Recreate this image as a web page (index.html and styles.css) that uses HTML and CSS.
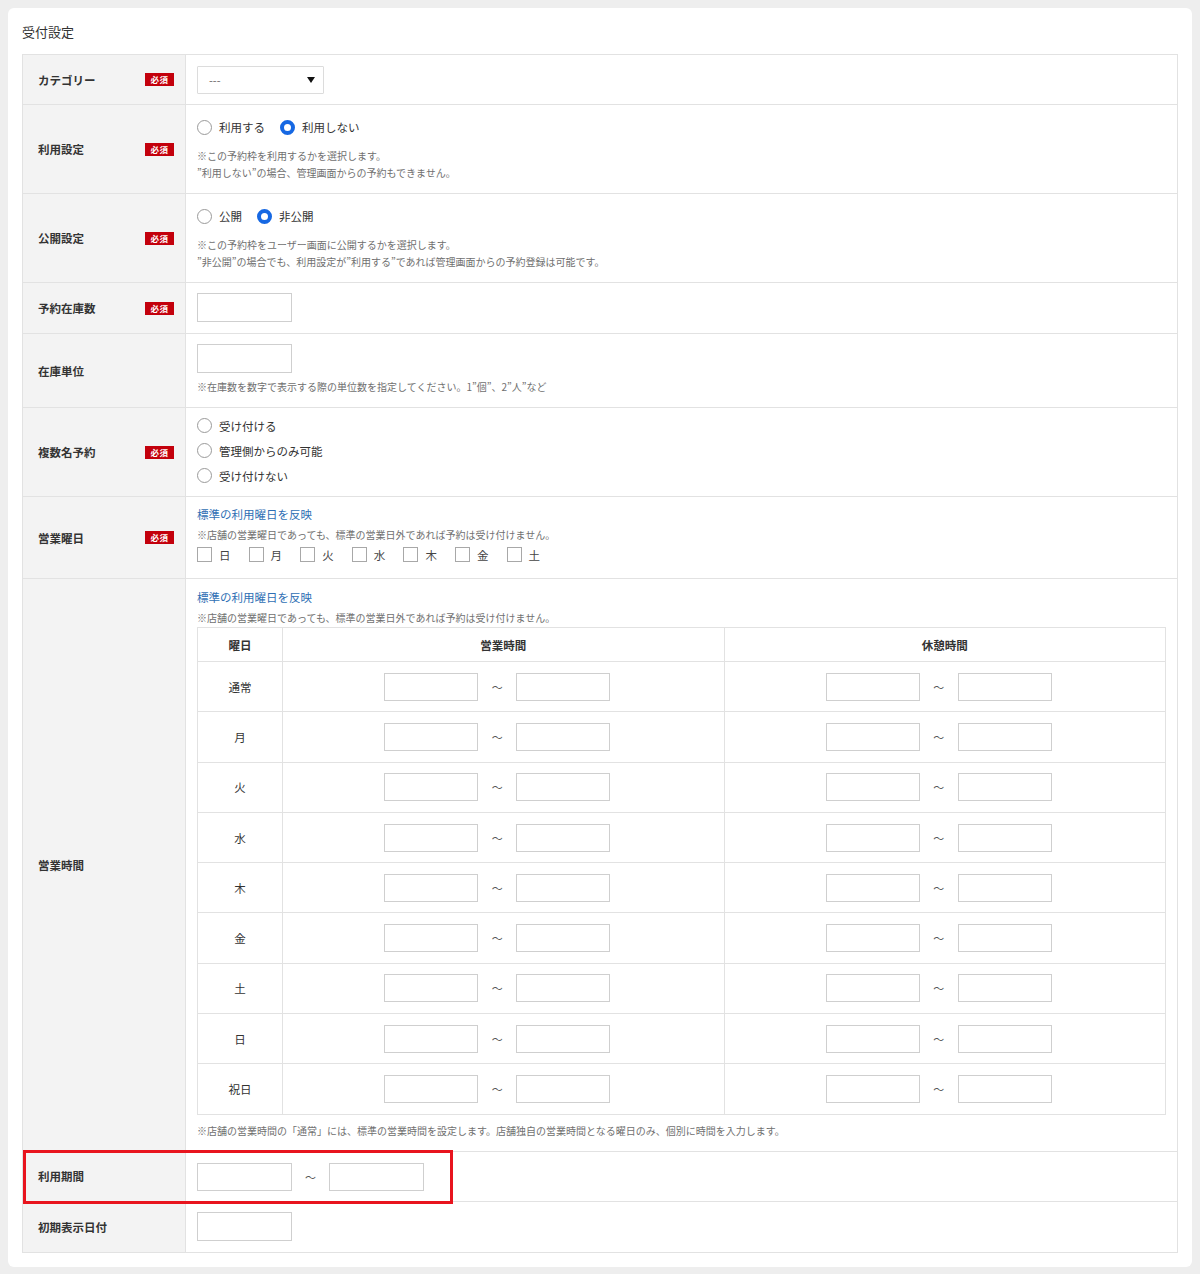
FILE: index.html
```html
<!DOCTYPE html>
<html lang="ja">
<head>
<meta charset="utf-8">
<title>受付設定</title>
<link rel="stylesheet" href="styles.css">
</head>
<body>
<div class="card">
  <h2 class="title">受付設定</h2>
  <div class="form-wrap">
    <table class="form">
      <colgroup><col class="c-label"><col></colgroup>
      <tr class="r-cat">
        <th><div class="lab"><span>カテゴリー</span><span class="req">必須</span></div></th>
        <td><div class="select"><span>---</span><span class="arrow"></span></div></td>
      </tr>
      <tr class="r-radio">
        <th><div class="lab"><span>利用設定</span><span class="req">必須</span></div></th>
        <td>
          <div class="radios">
            <label class="radio"><span class="rb"></span>利用する</label>
            <label class="radio"><span class="rb on"></span>利用しない</label>
          </div>
          <p class="note first">※この予約枠を利用するかを選択します。</p>
          <p class="note">”利用しない”の場合、管理画面からの予約もできません。</p>
        </td>
      </tr>
      <tr class="r-radio">
        <th><div class="lab"><span>公開設定</span><span class="req">必須</span></div></th>
        <td>
          <div class="radios">
            <label class="radio"><span class="rb"></span>公開</label>
            <label class="radio"><span class="rb on"></span>非公開</label>
          </div>
          <p class="note first">※この予約枠をユーザー画面に公開するかを選択します。</p>
          <p class="note">”非公開”の場合でも、利用設定が”利用する”であれば管理画面からの予約登録は可能です。</p>
        </td>
      </tr>
      <tr class="r-input">
        <th><div class="lab"><span>予約在庫数</span><span class="req">必須</span></div></th>
        <td><span class="inp"></span></td>
      </tr>
      <tr class="r-unit">
        <th><div class="lab"><span>在庫単位</span></div></th>
        <td>
          <span class="inp"></span>
          <p class="note unit-note">※在庫数を数字で表示する際の単位数を指定してください。1”個”、2”人”など</p>
        </td>
      </tr>
      <tr class="r-multi">
        <th><div class="lab"><span>複数名予約</span><span class="req">必須</span></div></th>
        <td>
          <div class="vradios">
            <label class="radio"><span class="rb"></span>受け付ける</label>
            <label class="radio"><span class="rb"></span>管理側からのみ可能</label>
            <label class="radio"><span class="rb"></span>受け付けない</label>
          </div>
        </td>
      </tr>
      <tr class="r-days">
        <th><div class="lab"><span>営業曜日</span><span class="req">必須</span></div></th>
        <td>
          <a class="link">標準の利用曜日を反映</a>
          <p class="note">※店舗の営業曜日であっても、標準の営業日外であれば予約は受け付けません。</p>
          <div class="checks">
            <label class="check"><span class="cb"></span>日</label>
            <label class="check"><span class="cb"></span>月</label>
            <label class="check"><span class="cb"></span>火</label>
            <label class="check"><span class="cb"></span>水</label>
            <label class="check"><span class="cb"></span>木</label>
            <label class="check"><span class="cb"></span>金</label>
            <label class="check"><span class="cb"></span>土</label>
          </div>
        </td>
      </tr>
      <tr class="r-hours">
        <th><div class="lab"><span>営業時間</span></div></th>
        <td>
          <a class="link">標準の利用曜日を反映</a>
          <p class="note">※店舗の営業曜日であっても、標準の営業日外であれば予約は受け付けません。</p>
          <table class="hours">
            <colgroup><col class="c-day"><col><col></colgroup>
            <thead>
              <tr><th>曜日</th><th>営業時間</th><th>休憩時間</th></tr>
            </thead>
            <tbody>
              <tr><td class="day">通常</td><td><div class="range"><span class="inp s"></span><span class="tilde">～</span><span class="inp s"></span></div></td><td><div class="range"><span class="inp s"></span><span class="tilde">～</span><span class="inp s"></span></div></td></tr>
              <tr><td class="day">月</td><td><div class="range"><span class="inp s"></span><span class="tilde">～</span><span class="inp s"></span></div></td><td><div class="range"><span class="inp s"></span><span class="tilde">～</span><span class="inp s"></span></div></td></tr>
              <tr><td class="day">火</td><td><div class="range"><span class="inp s"></span><span class="tilde">～</span><span class="inp s"></span></div></td><td><div class="range"><span class="inp s"></span><span class="tilde">～</span><span class="inp s"></span></div></td></tr>
              <tr><td class="day">水</td><td><div class="range"><span class="inp s"></span><span class="tilde">～</span><span class="inp s"></span></div></td><td><div class="range"><span class="inp s"></span><span class="tilde">～</span><span class="inp s"></span></div></td></tr>
              <tr><td class="day">木</td><td><div class="range"><span class="inp s"></span><span class="tilde">～</span><span class="inp s"></span></div></td><td><div class="range"><span class="inp s"></span><span class="tilde">～</span><span class="inp s"></span></div></td></tr>
              <tr><td class="day">金</td><td><div class="range"><span class="inp s"></span><span class="tilde">～</span><span class="inp s"></span></div></td><td><div class="range"><span class="inp s"></span><span class="tilde">～</span><span class="inp s"></span></div></td></tr>
              <tr><td class="day">土</td><td><div class="range"><span class="inp s"></span><span class="tilde">～</span><span class="inp s"></span></div></td><td><div class="range"><span class="inp s"></span><span class="tilde">～</span><span class="inp s"></span></div></td></tr>
              <tr><td class="day">日</td><td><div class="range"><span class="inp s"></span><span class="tilde">～</span><span class="inp s"></span></div></td><td><div class="range"><span class="inp s"></span><span class="tilde">～</span><span class="inp s"></span></div></td></tr>
              <tr><td class="day">祝日</td><td><div class="range"><span class="inp s"></span><span class="tilde">～</span><span class="inp s"></span></div></td><td><div class="range"><span class="inp s"></span><span class="tilde">～</span><span class="inp s"></span></div></td></tr>
            </tbody>
          </table>
          <p class="note hours-note">※店舗の営業時間の「通常」には、標準の営業時間を設定します。店舗独自の営業時間となる曜日のみ、個別に時間を入力します。</p>
        </td>
      </tr>
      <tr class="r-period">
        <th><div class="lab"><span>利用期間</span></div></th>
        <td><div class="period"><span class="inp"></span><span class="tilde">～</span><span class="inp"></span></div></td>
      </tr>
      <tr class="r-input">
        <th><div class="lab"><span>初期表示日付</span></div></th>
        <td><span class="inp"></span></td>
      </tr>
    </table>
    <div class="highlight"></div>
  </div>
</div>
</body>
</html>
```

FILE: styles.css
```css
* { box-sizing: border-box; }
html, body { margin: 0; padding: 0; }
body {
  background: #eeeeee;
  padding: 8px;
  font-family: "Noto Sans CJK JP", "Noto Sans", sans-serif;
  color: #333;
  font-size: 12px;
}
.card {
  background: #fff;
  border-radius: 6px;
  padding: 15px 14px 14px 14px;
  min-height: 1258px;
}
.title {
  margin: 0 0 13px 0;
  font-size: 13px;
  font-weight: normal;
  line-height: 18px;
  color: #333;
}
.form-wrap { position: relative; }
.form {
  width: 100%;
  border-collapse: collapse;
  table-layout: fixed;
  border: 1px solid #e2e2e2;
}
.c-label { width: 163px; }
.form > tbody > tr > th,
.form > tr > th {
  background: #f3f3f3;
  border: 1px solid #e2e2e2;
  text-align: left;
  vertical-align: middle;
  padding: 0 11px 0 15px;
  font-weight: bold;
  font-size: 11.5px;
}
.form > tbody > tr > td,
.form > tr > td {
  border: 1px solid #e2e2e2;
  padding: 10px 11px 10px 11px;
  vertical-align: top;
}
.lab {
  display: flex;
  justify-content: space-between;
  align-items: center;
}
.req {
  display: inline-block;
  width: 29px;
  height: 13px;
  background: #c3000c;
  color: #fff;
  font-size: 8.5px;
  line-height: 13px;
  text-align: center;
  font-weight: bold;
  letter-spacing: 0.5px;
}
.select {
  width: 127px;
  height: 28px;
  border: 1px solid #dcdcdc;
  display: flex;
  align-items: center;
  justify-content: space-between;
  padding: 0 8px 0 11px;
  color: #666;
  font-size: 11px;
  border-radius: 1px;
}
.arrow {
  width: 0; height: 0;
  border-left: 4.5px solid transparent;
  border-right: 4.5px solid transparent;
  border-top: 6px solid #111;
}
.form > tbody > tr.r-cat > td { padding-top: 11px; padding-bottom: 10px; }
.radios { display: flex; gap: 15px; line-height: 24px; height: 24px; }
.radio {
  display: flex;
  align-items: center;
  gap: 7px;
  font-size: 11.5px;
  color: #333;
}
.rb {
  width: 15px; height: 15px;
  border: 1px solid #9a9a9a;
  border-radius: 50%;
  background: #fff;
  flex: none;
}
.rb.on {
  border: 4.5px solid #1668e3;
}
.note {
  margin: 0;
  font-size: 10px;
  line-height: 17px;
  color: #707070;
}
.note.first { margin-top: 8px; }
.form > tbody > tr.r-radio > td { padding-bottom: 12px; }
.inp {
  display: block;
  width: 95px;
  height: 29px;
  border: 1px solid #cfcfcf;
  background: #fff;
}
.form > tbody > tr.r-input > td { padding-top: 10px; padding-bottom: 11px; }
.form > tbody > tr.r-period > td { padding-top: 11px; padding-bottom: 10px; }
.r-period .inp { height: 28px; }
.unit-note { margin-top: 5px; }
.form > tbody > tr.r-unit > td { padding-top: 10px; padding-bottom: 12px; }
.form > tbody > tr.r-multi > td { padding-top: 5px; padding-bottom: 8px; }
.vradios { display: flex; flex-direction: column; }
.vradios .radio { height: 25px; }
.link {
  display: block;
  color: #2f6fb4;
  font-size: 11.5px;
  line-height: 20px;
  cursor: pointer;
}
.form > tbody > tr.r-days > td { padding-top: 7px; padding-bottom: 12px; }
.r-days .note { margin-top: 2px; }
.checks { display: flex; height: 23px; align-items: center; }
.check {
  display: flex;
  align-items: center;
  gap: 7px;
  width: 51.6px;
  font-size: 11.5px;
  color: #444;
}
.cb {
  width: 15px; height: 15px;
  border: 1px solid #a8a8a8;
  background: #fff;
  flex: none;
}
.form > tbody > tr.r-hours > td { padding-top: 8px; padding-bottom: 12px; }
.r-hours .note { margin-top: 2px; }
.hours {
  width: 100%;
  border-collapse: collapse;
  table-layout: fixed;
  margin-top: 1px;
  border: 1px solid #e2e2e2;
}
.c-day { width: 85px; }
.hours th {
  border: 1px solid #e2e2e2;
  height: 34px;
  font-size: 11.5px;
  font-weight: bold;
  text-align: center;
  vertical-align: middle;
  padding: 0;
}
.hours td {
  border: 1px solid #e2e2e2;
  height: 50.3px;
  vertical-align: middle;
  padding: 0 12px 0 0;
  text-align: center;
}
.hours td.day { padding: 0; font-size: 11.5px; color: #333; }
.range, .period {
  display: flex;
  justify-content: center;
  align-items: center;
}
.period { justify-content: flex-start; }
.inp.s { width: 94px; height: 28px; }
.tilde {
  width: 38px;
  text-align: center;
  color: #555;
  font-size: 11px;
}
.period .tilde { width: 37px; }
.note.hours-note { margin-top: 7px; }
.highlight {
  position: absolute;
  left: 1px;
  top: 1096px;
  width: 430px;
  height: 54px;
  border: 3px solid #e8141e;
  pointer-events: none;
}
```
